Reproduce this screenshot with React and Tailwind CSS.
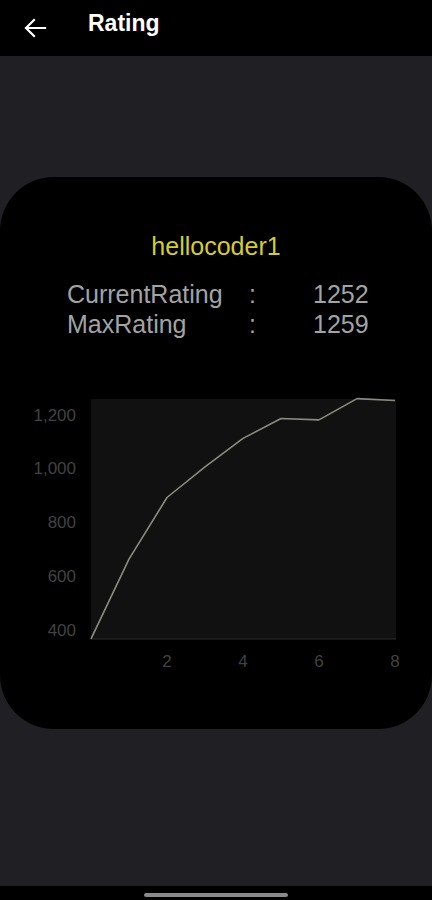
import React from "react";

const data = [365, 662, 891, 1005, 1111, 1185, 1180, 1259, 1252];
const xOf = (i) => 91 + 38 * i;
const yOf = (v) => 629.5 - (v - 400) * (215 / 800) - 390;

function Chart() {
  const pts = data.map((v, i) => `${xOf(i)},${yOf(v).toFixed(1)}`).join(" ");
  const yTicks = [400, 600, 800, 1000, 1200];
  const xTicks = [2, 4, 6, 8];
  return (
    <svg width="432" height="290" viewBox="0 0 432 290" className="block">
      <rect x="91" y="9" width="305" height="240" fill="#111111" />
      <line x1="91" y1="249" x2="396" y2="249" stroke="#2c2c2c" strokeWidth="1" />
      {yTicks.map((t) => (
        <text
          key={t}
          x="76"
          y={yOf(t) + 6}
          textAnchor="end"
          fontSize="17"
          fill="#424242"
          fontFamily="'Liberation Sans', Arial, sans-serif"
        >
          {t.toLocaleString("en-US")}
        </text>
      ))}
      {xTicks.map((t) => (
        <text
          key={t}
          x={xOf(t)}
          y="277"
          textAnchor="middle"
          fontSize="17"
          fill="#424242"
          fontFamily="'Liberation Sans', Arial, sans-serif"
        >
          {t}
        </text>
      ))}
      <polyline points={pts} fill="none" stroke="#8c8b83" strokeWidth="1.6" strokeLinejoin="round" />
    </svg>
  );
}

export default function App() {
  return (
    <div
      className="w-[432px] h-[900px] flex flex-col bg-[#202024] overflow-hidden"
      style={{ fontFamily: "'Liberation Sans', Arial, sans-serif" }}
    >
      <header className="h-[56px] bg-black flex items-center shrink-0">
        <svg width="24" height="20" viewBox="0 0 24 20" className="ml-[23px] -mt-[1px]">
          <path d="M3 10 H22 M11 2 L3 10 L11 18" fill="none" stroke="#ffffff" strokeWidth="2.2" strokeLinecap="square" strokeLinejoin="miter" />
        </svg>
        <h1 className="ml-[41px] text-white text-[23px] font-bold leading-none -mt-[10px]">Rating</h1>
      </header>

      <main className="flex-1 pt-[121px]">
        <section className="bg-black rounded-[54px] h-[552px] pt-[55px]">
          <div className="text-center text-[#d6cc2c] text-[25px] leading-[28px]">hellocoder1</div>
          <div className="mt-[19px] mx-auto w-[300px] translate-x-[1px] grid grid-cols-[182px_64px_auto] text-[25px] leading-[30px] text-[#a3a3a3]">
            <span>CurrentRating</span>
            <span>:</span>
            <span>1252</span>
            <span>MaxRating</span>
            <span>:</span>
            <span>1259</span>
          </div>
          <div className="mt-[51px]">
            <Chart />
          </div>
        </section>
      </main>

      <footer className="h-[14px] bg-black flex justify-center items-start shrink-0">
        <div className="mt-[7px] w-[144px] h-[4px] rounded-full bg-[#8a8a8a]" />
      </footer>
    </div>
  );
}
